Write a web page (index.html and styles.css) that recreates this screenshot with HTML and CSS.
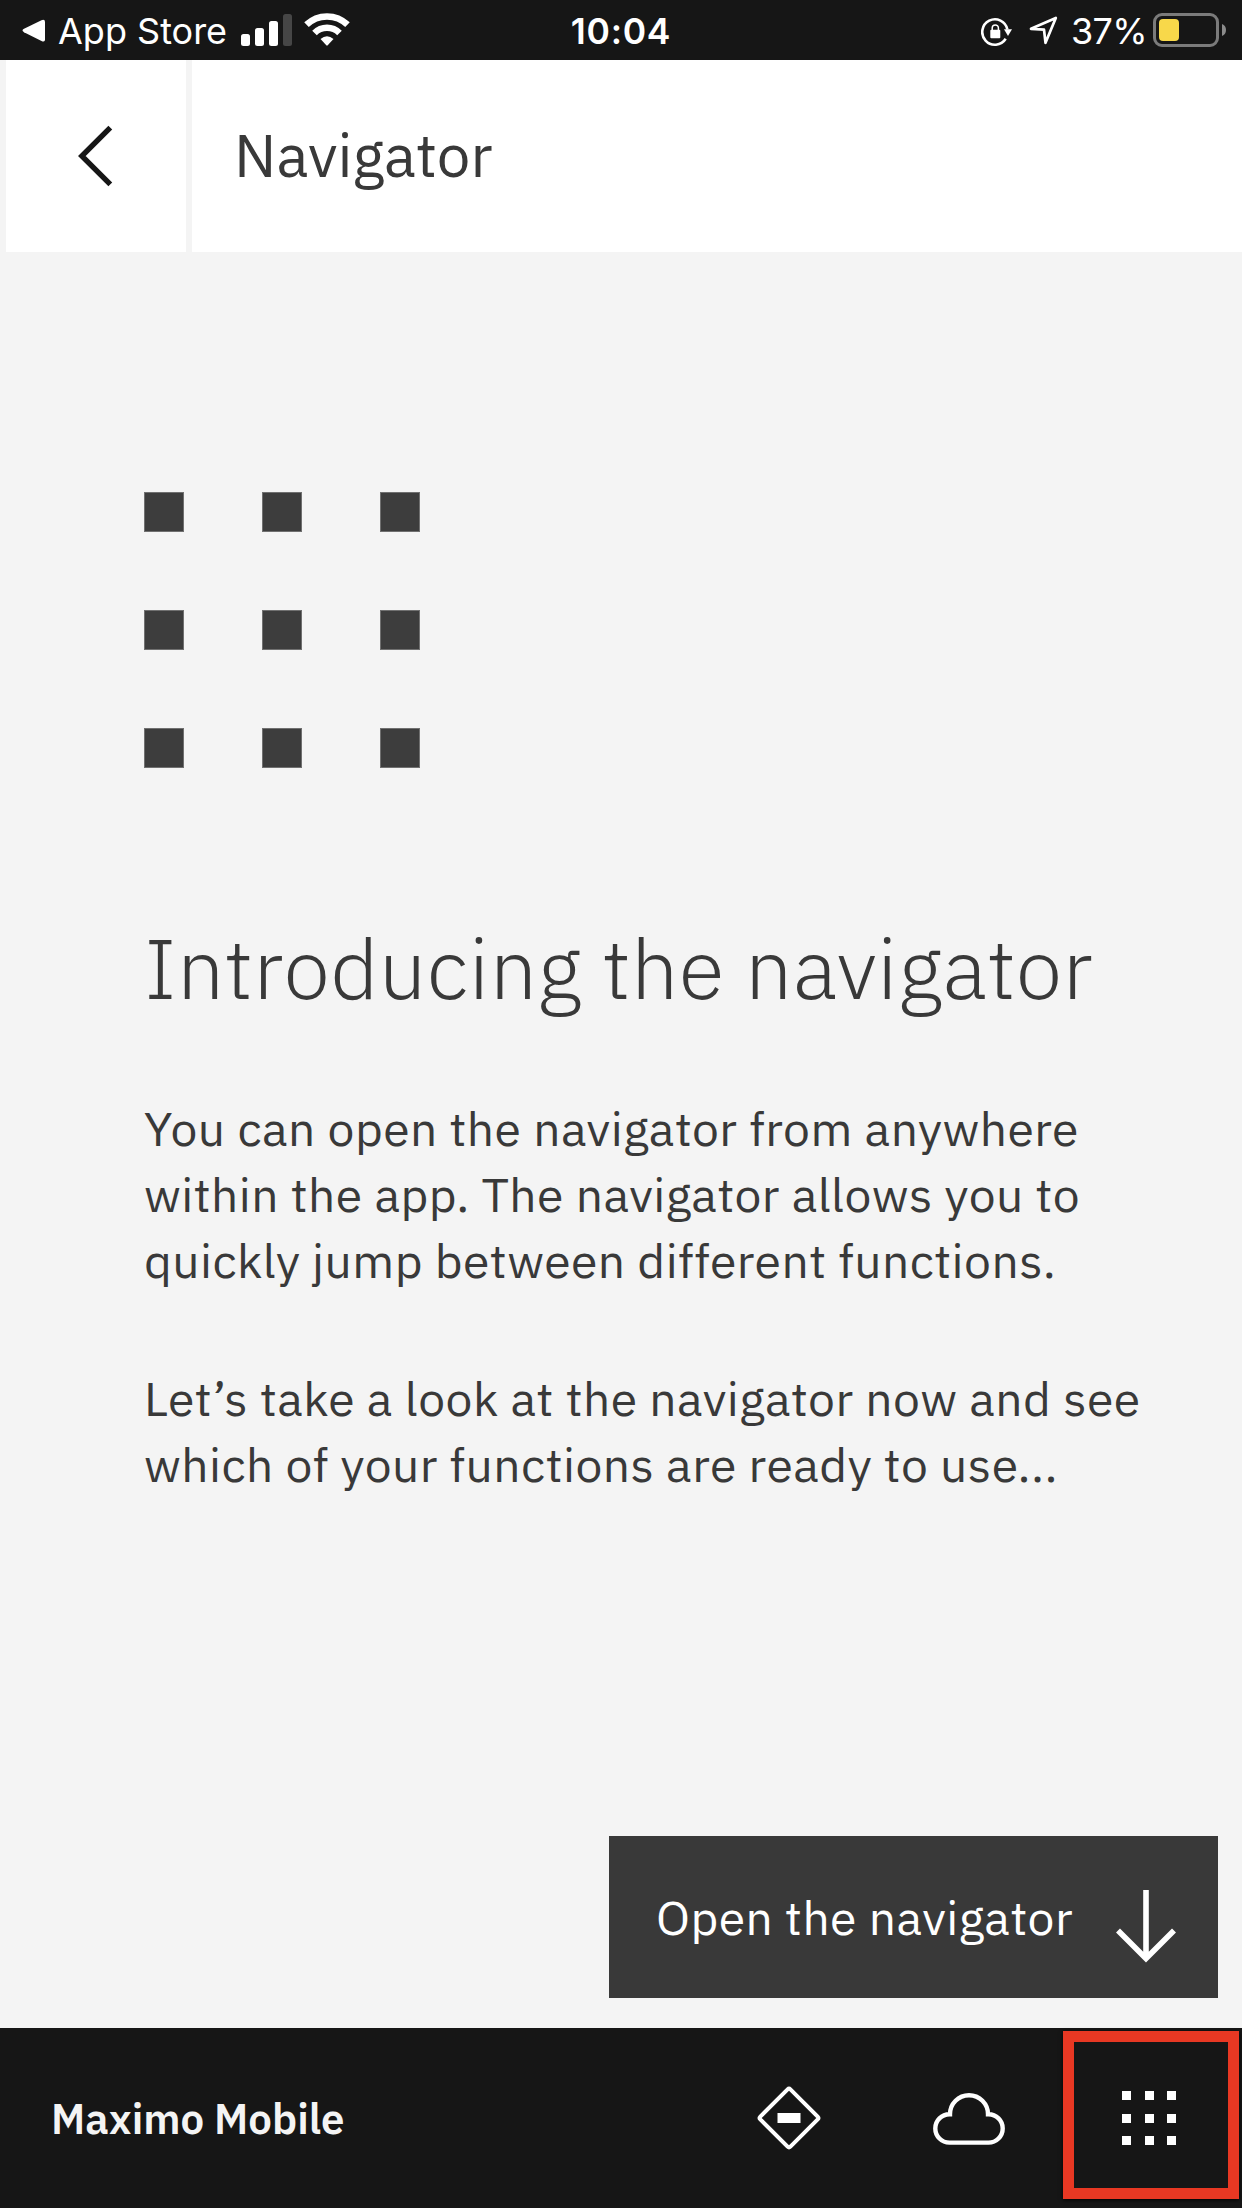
FILE: index.html
```html
<!DOCTYPE html>
<html lang="en">
<head>
<meta charset="utf-8">
<title>Navigator</title>
<link rel="stylesheet" href="styles.css">
</head>
<body>
<div class="screen">
  <div class="status">
    <div class="status-left">
      <svg class="back-tri" width="24" height="24" viewBox="0 0 24 24"><path d="M2 9.800 19.500 1.200Q23 0 23 3V20.500Q23 23.500 19.500 22L2 13.200Q-1 11.500 2 9.800Z" fill="#fff"/></svg>
      <span class="status-app">App Store</span>
      <svg class="signal" width="52" height="33" viewBox="0 0 52 33" fill="#fff"><rect x="0" y="20" width="9" height="12" rx="2.500"/><rect x="14" y="14" width="9" height="18" rx="2.500"/><rect x="28" y="7" width="9" height="25" rx="2.500"/><rect x="42" y="0" width="9" height="32" rx="2.500" fill="#464646"/></svg>
      <svg class="wifi" width="46" height="34" viewBox="0 0 46 34" fill="none" stroke="#fff"><path d="M2.500 11.700A29.500 29.500 0 0 1 43.500 11.700" stroke-width="6.500"/><path d="M10.500 20A17.800 17.800 0 0 1 35.500 20" stroke-width="6.500"/><path d="M16.500 26Q23 20.500 29.500 26L23.700 32.300Q23 33 22.300 32.300Z" fill="#fff" stroke="none"/></svg>
    </div>
    <span class="status-time">10:04</span>
    <div class="status-right">
      <svg class="lock" width="34" height="34" viewBox="0 0 34 34"><path d="M26.400 14.500A12.700 12.700 0 1 0 24.700 23.800" fill="none" stroke="#fff" stroke-width="2.600"/><path d="M23 14.300H31L27 21Z" fill="#fff"/><rect x="9.300" y="14.800" width="10" height="8.500" rx="1" fill="#fff"/><path d="M11.200 15.500V13a3.100 3.100 0 0 1 6.200 0V15.500" fill="none" stroke="#fff" stroke-width="1.500"/></svg>
      <svg class="loc" width="30" height="30" viewBox="0 0 30 30"><path d="M2 12.800 26.800 2 16.500 26.800 15 13.600Z" fill="none" stroke="#fff" stroke-width="2.700" stroke-linejoin="round"/></svg>
      <span class="status-pct">37%</span>
      <svg class="battery" width="74" height="34" viewBox="0 0 74 34"><rect x="1.500" y="1.500" width="63" height="31" rx="7.500" fill="none" stroke="#7b7b7b" stroke-width="3"/><rect x="6" y="6" width="20" height="22" rx="4" fill="#f8d84a"/><path d="M69 11Q73 12.500 73 17T69 23Z" fill="#8b8b8b"/></svg>
    </div>
  </div>

  <header class="header">
    <button class="back" aria-label="Back"><svg width="36" height="62" viewBox="0 0 36 62"><path d="M32.300 2.600 3.800 31 32.300 59.400" fill="none" stroke="#161616" stroke-width="5.400"/></svg></button>
    <h1 class="title">Navigator</h1>
  </header>

  <main class="content">
    <div class="grid-icon"><i></i><i></i><i></i><i></i><i></i><i></i><i></i><i></i><i></i></div>
    <h2 class="heading">Introducing the navigator</h2>
    <p class="para">You can open the navigator from anywhere<br>within the app. The navigator allows you to<br>quickly jump between different functions.</p>
    <p class="para para-next">Let’s take a look at the navigator now and see<br>which of your functions are ready to use...</p>
    <button class="open"><span>Open the navigator</span><svg width="62" height="74" viewBox="0 0 62 74"><path d="M31 0V68M3 40.500 31 68.500 59 40.500" fill="none" stroke="#fff" stroke-width="5.600"/></svg></button>
  </main>

  <footer class="footer">
    <span class="brand">Maximo Mobile</span>
    <svg class="f-diamond" width="64" height="64" viewBox="0 0 64 64"><rect x="10.700" y="10.700" width="42.600" height="42.600" rx="2" fill="none" stroke="#fff" stroke-width="4" transform="rotate(45 32 32)"/><rect x="20.500" y="27" width="23" height="10" fill="#fff"/></svg>
    <svg class="f-cloud" width="72" height="52" viewBox="0 0 72 52"><path d="M16.500 49.600H55.500A14.200 14.200 0 0 0 55.500 21.200H55A19 19 0 0 0 17 21.200H16.500A14.200 14.200 0 0 0 16.500 49.600Z" fill="none" stroke="#fff" stroke-width="4.400"/></svg>
    <button class="nav" aria-label="Navigator"><span class="dots"><i></i><i></i><i></i><i></i><i></i><i></i><i></i><i></i><i></i></span></button>
  </footer>
</div>
</body>
</html>
```
FILE: styles.css
```css
* { box-sizing: border-box; margin: 0; padding: 0; }
body { background: #f4f4f4; }
button { border: 0; background: none; font: inherit; letter-spacing: inherit; }
svg { display: block; flex: none; }
.screen { width: 1242px; height: 2208px; display: flex; flex-direction: column; font-family: "IBM Plex Sans", "Open Sans", sans-serif; color: #393939; background: #f4f4f4; overflow: hidden; white-space: nowrap; }

.status { height: 60px; background: #161616; color: #fff; display: grid; grid-template-columns: 1fr auto 1fr; font: 400 36px/60px Inter, sans-serif; }
.status-left, .status-right { display: flex; align-items: flex-start; }
.status-left { padding-left: 22px; }
.status-right { justify-content: flex-end; padding-right: 15px; }
.back-tri { margin-top: 19px; }
.status-app { margin: 1px 0 0 12px; }
.signal { margin: 14px 0 0 14px; }
.wifi { margin: 13px 0 0 11px; }
.status-time { font-weight: 600; font-size: 35.5px; letter-spacing: 0.7px; margin-top: 2px; }
.lock { margin-top: 15px; }
.loc { margin: 16px 0 0 14px; }
.status-pct { width: 76px; margin: 1px 0 0 12px; letter-spacing: -0.7px; }
.battery { margin: 13px 0 0 6px; }

.header { height: 192px; padding-left: 6px; display: flex; gap: 6px; }
.back { width: 180px; background: #fff; display: flex; align-items: center; padding-left: 72px; }
.title { flex: 1; background: #fff; padding-left: 42px; font-weight: 400; font-size: 60px; line-height: 189px; }

.content { flex: 1; padding: 240px 24px 0 144px; display: flex; flex-direction: column; letter-spacing: 0.46px; }
.grid-icon { display: grid; grid-template-columns: repeat(3, 40px); grid-auto-rows: 40px; gap: 78px; }
.grid-icon i { background: #3d3d3d; border: 1px solid #707070; }
.heading { margin-top: 142px; font-weight: 300; font-size: 84px; line-height: 116px; letter-spacing: 0.42px; }
.para { margin-top: 69px; font-size: 48px; line-height: 66px; }
.para-next { margin-top: 72px; }
.open { align-self: flex-end; margin: auto 0 30px; width: 609px; height: 162px; background: #393939; color: #fff; font-size: 48px; display: flex; align-items: center; justify-content: space-between; padding: 0 41px 0 47px; }
.open svg { margin-top: 20px; }

.footer { height: 180px; background: #161616; color: #f4f4f4; display: flex; align-items: center; padding-left: 51px; }
.brand { font-weight: 600; font-size: 42px; width: 706px; }
.f-cloud { margin: 2px 0 0 112px; }
.nav { align-self: flex-start; margin: 3px 0 0 58px; width: 176px; height: 168px; border: 11px solid #e83823; box-shadow: 0 1px 4px #000; display: flex; align-items: center; justify-content: center; padding: 6px 4px 0 0; }
.dots { display: grid; grid-template-columns: repeat(3, 9px); grid-auto-rows: 9px; gap: 13.5px; }
.dots i { background: #fff; }
```
